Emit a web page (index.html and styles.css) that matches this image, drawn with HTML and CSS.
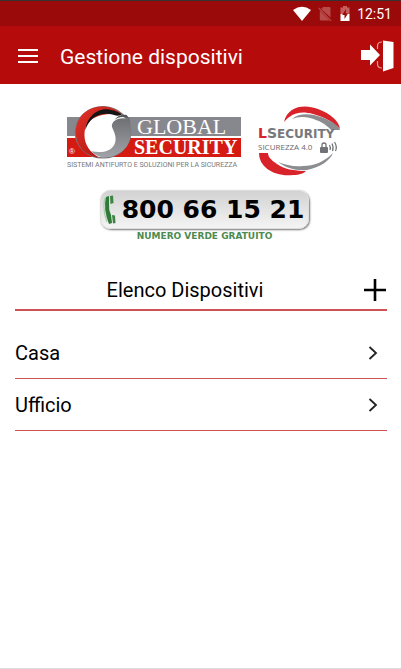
FILE: index.html
```html
<!DOCTYPE html>
<html lang="it">
<head>
  <meta charset="UTF-8" />
  <meta name="viewport" content="width=device-width, initial-scale=1.0"/>
  <title>Gestione dispositivi</title>
  <link rel="stylesheet" href="styles.css">
</head>
<body>

<!-- Status bar -->
<div class="status-bar">
  <svg width="18" height="16" viewBox="0 0 18 16">
    <path d="M0 4Q9 -2.500 18 4L9 15Z" fill="#fff"/>
  </svg>
  <svg class="sim" width="14" height="16" viewBox="0 0 14 16">
    <path d="M5 1H11.500Q12.500 1 12.500 2V11.500L3.200 3ZM1.800 4.500L11.500 14.500H3Q1.800 14.500 1.800 13.500Z" fill="#b94a4a"/>
    <path d="M0.800 2L13 14.800" stroke="#b94a4a" stroke-width="1.200"/>
  </svg>
  <svg width="10" height="16" viewBox="0 0 10 16">
    <path d="M3 0H7V1.500H9.500V8H0.500V1.500H3Z" fill="#c75c5c"/>
    <path d="M0.500 8H9.500V15H0.500Z" fill="#fff"/>
    <path d="M6 3L2.200 9H4.500V13L8 7.500H5.800Z" fill="#9b0a0a"/>
  </svg>
  <span>12:51</span>
</div>

<header class="app-bar">
  <button class="icon-button menu-button" aria-label="Menu">
    <svg width="20" height="14" viewBox="0 0 20 14">
      <path d="M0 1H20M0 7H20M0 13H20" stroke="#fff" stroke-width="1.900"/>
    </svg>
  </button>
  <h1>Gestione dispositivi</h1>
  <button class="icon-button" aria-label="Esci">
    <svg width="34" height="32" viewBox="0 0 34 32">
      <path d="M22 2Q17.500 2 17.500 6V9M17.500 21V24Q17.500 28 22 28" fill="none" stroke="#e89a9a" stroke-width="1.200"/>
      <path d="M1 10H10V4.500L20 15L10 25.500V20H1Z" fill="#fff"/>
      <path d="M23 0.500L33.500 2V28L23 31.500Z" fill="#fff"/>
    </svg>
  </button>
</header>

<main>
  <!-- Brand logos -->
  <div class="logos">
    <svg width="183" height="74" viewBox="60 104 183 74" role="img" aria-label="Global Security">
      <defs>
        <linearGradient id="ring-red" x1="0" y1="0" x2="1" y2="1">
          <stop offset="0" stop-color="#e3342a"/>
          <stop offset="1" stop-color="#a80d0d"/>
        </linearGradient>
        <linearGradient id="ring-grey" x1="0" y1="0" x2="0" y2="1">
          <stop offset="0" stop-color="#6f7074"/>
          <stop offset="1" stop-color="#a2a3a8"/>
        </linearGradient>
      </defs>
      <rect x="67" y="117" width="174" height="19" fill="#87878e"/>
      <rect x="67" y="138" width="174" height="19" fill="#d51a12"/>
      <text class="logo-serif" x="137" y="134" font-size="22">GLOBAL</text>
      <text class="logo-serif" x="134" y="154" font-size="20" font-weight="700">SECURITY</text>
      <text class="logo-mark" x="69" y="154">®</text>
      <g transform="translate(60 98) scale(0.333)">
        <ellipse cx="129" cy="103" rx="83" ry="77" fill="#fff" stroke="#77787c" stroke-width="4"/>
        <path d="M186 49C150 14 86 18 58 62C36 100 48 148 84 168C96 175 106 178 116 178C88 162 70 136 74 102C78 66 110 42 186 49Z" fill="url(#ring-red)"/>
        <path d="M76 96C80 62 108 28 150 35C166 38 178 43 186 49C180 54 172 55 160 50C118 40 88 60 76 96Z" fill="#151515"/>
        <path d="M210 64C172 54 154 72 156 86C162 102 170 114 166 132C160 156 134 168 94 160C106 174 124 180 142 178C186 172 218 140 212 92C212 82 212 72 210 64Z" fill="url(#ring-grey)"/>
        <path d="M210 64C192 54 176 56 164 66C172 52 188 48 200 51Z" fill="#55565a"/>
      </g>
      <text class="tagline" x="67" y="167">SISTEMI ANTIFURTO E SOLUZIONI PER LA SICUREZZA</text>
    </svg>

    <svg width="86" height="74" viewBox="255 104 86 74" role="img" aria-label="LSecurity Sicurezza 4.0">
      <path d="M284 122C288 106 304 104 318 109C331 114 339 121 340 129C332 121 324 117 313 114C299 110 291 114 284 122Z" fill="#d9232b"/>
      <path d="M292 119C300 112 312 114 321 117C332 121 339 126 340 130H331C326 124 318 120 310 118C302 116 297 117 292 119Z" fill="#8b8d90"/>
      <path d="M259 153C259 167 274 177 293 175C300 175 304 173 306 171C294 171 284 169 277 164C271 160 268 157 268 153Z" fill="#d9232b"/>
      <path d="M278 162C286 168 296 171 307 170C320 167 330 161 333 153C324 162 314 166 303 166C294 167 286 165 278 162Z" fill="#8b8d90"/>
      <text class="wordmark" x="258" y="138"><tspan class="wordmark-initial">L</tspan><tspan font-size="14">S</tspan>ECURITY</text>
      <text class="subline" x="258" y="150">SICUREZZA 4.0</text>
      <rect x="320" y="147" width="8" height="6" rx="1" fill="#707277"/>
      <path d="M322 147V145Q322 143 324 143Q326 143 326 145V147" fill="none" stroke="#707277" stroke-width="1.300"/>
      <path d="M329.500 145Q331 147.500 330 150M332 143.500Q334 147.500 332.500 151M334.500 142Q337.500 146.500 335.500 151" fill="none" stroke="#707277" stroke-width="1.200"/>
    </svg>
  </div>

  <!-- Toll-free number -->
  <div class="hotline">
    <a class="hotline-number" href="tel:800661521">
      <svg width="14" height="30" viewBox="0 0 14 30">
        <path d="M2 3Q-1 14 4 27" fill="none" stroke="#a9cba9" stroke-width="1.200"/>
        <path d="M3 2L6 1V9Q5.500 15 8 20L9 28L6 29Q0 14 3 2Z" fill="#2f7a38"/>
        <path d="M7 1L10 0.500L10.500 8L7.500 9ZM9 20L12 20.500L12.500 28L10 28.500Z" fill="#3c8444"/>
      </svg>
      <span>800 66 15 21</span>
    </a>
    <p>NUMERO VERDE GRATUITO</p>
  </div>

  <section class="devices">
    <div class="devices-header">
      <h2>Elenco Dispositivi</h2>
      <button class="icon-button" aria-label="Aggiungi dispositivo">
        <svg width="24" height="24" viewBox="0 0 24 24">
          <path d="M12 1V23M1 12H23" stroke="#000" stroke-width="2.600"/>
        </svg>
      </button>
    </div>
    <ul class="device-list">
      <li>
        <a href="#casa">Casa
          <svg width="10" height="14" viewBox="0 0 10 14"><path d="M1.500 1L8 7L1.500 13" fill="none" stroke="#222" stroke-width="1.800"/></svg>
        </a>
      </li>
      <li>
        <a href="#ufficio">Ufficio
          <svg width="10" height="14" viewBox="0 0 10 14"><path d="M1.500 1L8 7L1.500 13" fill="none" stroke="#222" stroke-width="1.800"/></svg>
        </a>
      </li>
    </ul>
  </section>
</main>

</body>
</html>
```
FILE: styles.css
```css
:root {
  --primary: #b50b0b;
  --primary-dark: #9b0a0a;
  --line: #cf5252;
}

* {
  box-sizing: border-box;
}

body {
  margin: 0;
  min-height: 100vh;
  font-family: Roboto, sans-serif;
  color: #000;
  background: #fff;
  border-top: 1px solid #333;
  border-bottom: 1px solid #dcdcdc;
}

h1,
h2 {
  margin: 0;
  font-weight: 400;
}

svg {
  display: block;
  flex: none;
}

.status-bar {
  display: flex;
  align-items: center;
  justify-content: flex-end;
  height: 25px;
  padding-right: 9px;
  color: #fff;
  font-size: 14px;
  background: var(--primary-dark);
}

.status-bar .sim {
  margin: 0 8px 0 7px;
}

.status-bar span {
  margin-left: 7px;
}

.app-bar {
  display: flex;
  align-items: center;
  height: 58px;
  padding: 1px 7px 0 18px;
  color: #fff;
  background: var(--primary);
}

.app-bar h1 {
  flex: 1;
  margin-left: 22px;
  padding-top: 2px;
  font-size: 21px;
}

.icon-button {
  padding: 0;
  border: none;
  background: none;
  cursor: pointer;
}

.logos {
  display: flex;
  justify-content: center;
  gap: 12px;
  padding-top: 20px;
}

.logo-serif {
  font-family: "Liberation Serif", serif;
  fill: #fff;
}

.logo-mark {
  font-family: "Liberation Sans", sans-serif;
  font-size: 8px;
  fill: #fff;
}

.tagline {
  font-family: "Liberation Sans Narrow", Roboto, sans-serif;
  font-size: 7px;
  fill: #77777c;
}

.wordmark {
  font-family: "DejaVu Sans", sans-serif;
  font-size: 12px;
  font-weight: 700;
  fill: #77787c;
}

.wordmark-initial {
  font-size: 14px;
  fill: #d9232b;
}

.subline {
  font-family: "Open Sans", sans-serif;
  font-size: 8px;
  fill: #68696d;
}

.hotline {
  display: flex;
  flex-direction: column;
  align-items: center;
  padding: 12px 0 0 8px;
  font-family: "DejaVu Sans", sans-serif;
  font-weight: 700;
}

.hotline-number {
  display: flex;
  align-items: center;
  gap: 5px;
  height: 39px;
  padding: 0 4px 0 2px;
  color: #000;
  font-size: 25px;
  text-decoration: none;
  background: linear-gradient(#d2d2d2, #f4f4f4);
  border: 1px solid #ddd;
  border-radius: 10px;
  box-shadow: 1px 1px 2px #777;
}

.hotline p {
  margin: 2px 0 0;
  font-size: 9px;
  line-height: 10px;
  color: #4d8a50;
}

.devices {
  padding: 29px 14px 0 15px;
}

.devices-header {
  display: flex;
  align-items: center;
  height: 41px;
  border-bottom: 2px solid var(--line);
}

.devices-header h2 {
  flex: 1;
  font-size: 20px;
  text-align: center;
}

.devices-header .icon-button {
  padding-left: 8px;
}

.device-list {
  margin: 16px 0 0;
  padding: 0;
  list-style: none;
}

.device-list a {
  display: flex;
  align-items: center;
  justify-content: space-between;
  height: 52px;
  padding-right: 9px;
  color: inherit;
  font-size: 20px;
  text-decoration: none;
  border-bottom: 1px solid var(--line);
}
```
